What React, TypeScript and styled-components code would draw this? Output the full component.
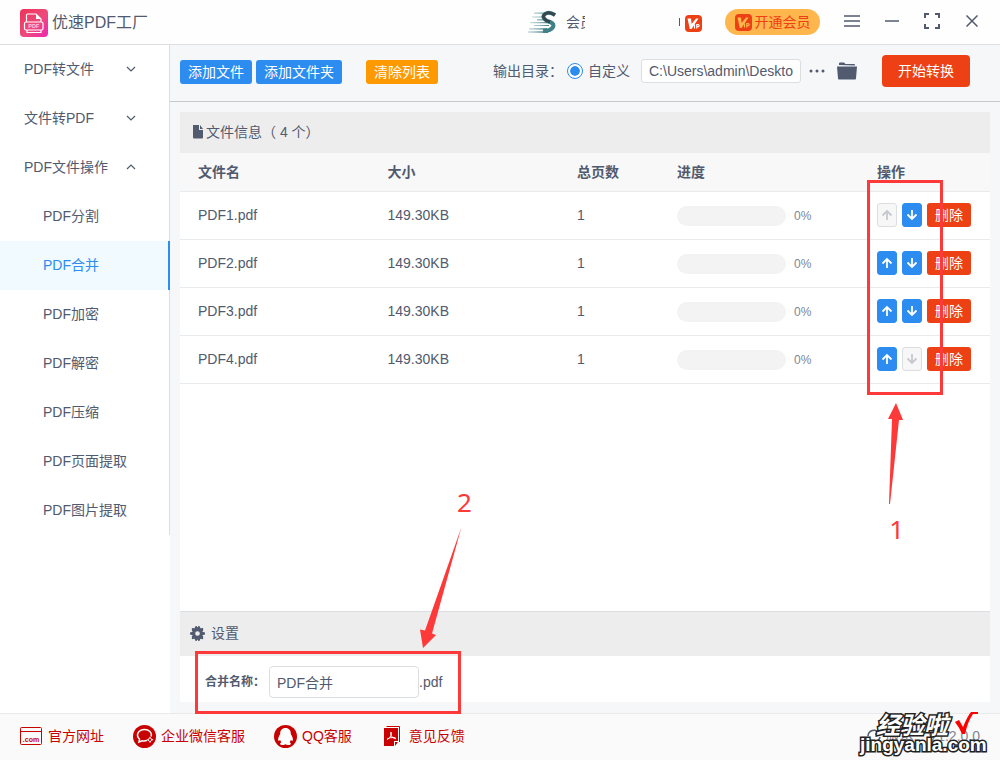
import React, { useState } from 'react';
import styled, { createGlobalStyle, css } from 'styled-components';

const text = '#515a6e';
const blue = '#2d8cf0';
const red = '#ed4014';
const mark = '#fd3939';
const line = '#dcdee2';

const GlobalStyle = createGlobalStyle`
  * { box-sizing: border-box; }
  body {
    margin: 0;
    background: #f5f7f9;
    color: ${text};
    font: 14px/20px "Liberation Sans", "Noto Sans CJK SC", sans-serif;
  }
  button, input { font: inherit; color: inherit; }
  button { border: 0; padding: 0; cursor: pointer; }
  svg { display: block; flex: none; }
`;

const Page = styled.div`
  min-height: 100vh;
  display: flex;
  flex-direction: column;
`;

const Header = styled.header`
  height: 45px;
  flex: none;
  display: flex;
  align-items: center;
  padding: 0 20px;
  background: #fefefe;
  border-bottom: 1px solid ${line};
`;

const Brand = styled.h1`
  margin: 2px auto 0 0;
  display: flex;
  align-items: center;
  gap: 4px;
  font-size: 16px;
  font-weight: 400;
`;

const Account = styled.div`
  display: flex;
  align-items: center;
  gap: 10px;
`;

const UserName = styled.span`
  width: 19px;
  height: 20px;
  overflow: hidden;
  white-space: nowrap;
`;

const NameEnd = styled.span`
  width: 1px;
  height: 8px;
  margin: 0 5px 0 84px;
  background: ${text};
`;

const VipBadge = styled.span`
  display: flex;
  margin: 2px 0 0 -10px;
`;

const JoinButton = styled.button`
  height: 26px;
  width: 95px;
  display: flex;
  align-items: center;
  justify-content: center;
  gap: 3px;
  margin: 0 24px 0 23px;
  border-radius: 13px;
  background: #ffb64d;
  color: ${red};
`;

const WindowControls = styled.div`
  display: flex;
  gap: 24px;
  padding-bottom: 2px;
`;

const IconButton = styled.button`
  min-width: 16px;
  height: 20px;
  display: flex;
  align-items: center;
  justify-content: center;
  background: none;
`;

const Body = styled.div`
  flex: 1;
  display: flex;
`;

const Sidebar = styled.nav`
  width: 170px;
  flex: none;
  background: #fff;
`;

const Menu = styled.div`
  border-right: 1px solid ${line};
`;

const MenuGroup = styled.button`
  width: 100%;
  height: 49px;
  display: flex;
  align-items: center;
  justify-content: space-between;
  padding: 0 33px 2px 24px;
  background: none;
`;

const MenuItem = styled.a<{ $active?: boolean }>`
  height: 49px;
  display: flex;
  align-items: center;
  padding: 0 0 2px 43px;
  color: inherit;
  text-decoration: none;
  ${p => p.$active && css`
    margin-right: -1px;
    color: ${blue};
    background: #f0faff;
    border-right: 2px solid ${blue};
  `}
`;

const Main = styled.main`
  flex: 1;
  min-width: 0;
  display: flex;
  flex-direction: column;
`;

const Toolbar = styled.div`
  height: 57px;
  flex: none;
  display: flex;
  align-items: center;
  padding: 0 30px 4px 10px;
  border-bottom: 1px solid #c8cad0;
`;

const Button = styled.button<{ $color?: string; $large?: boolean }>`
  height: ${p => (p.$large ? 32 : 24)}px;
  padding: 0 ${p => (p.$large ? 16 : 8)}px;
  border-radius: ${p => (p.$large ? 4 : 3)}px;
  background: ${p => p.$color ?? blue};
  color: #fff;
  white-space: nowrap;
`;

const ListButtons = styled.div`
  display: flex;
  gap: 24px;
  padding-top: 2px;
`;

const AddButtons = styled.div`
  display: flex;
  gap: 4px;
`;

const OutputOptions = styled.div`
  display: flex;
  align-items: center;
  margin-left: auto;
  margin-right: 25px;
`;

const RadioLabel = styled.label`
  display: flex;
  align-items: center;
  gap: 5px;
  margin-right: 11px;
`;

const Radio = styled.input`
  appearance: none;
  width: 16px;
  height: 16px;
  margin: 0 0 0 4px;
  padding: 2px;
  border: 1px solid ${blue};
  border-radius: 50%;
  background: ${blue} content-box;
  box-shadow: inset 0 0 0 2px #fff;
`;

const TextBox = styled.input<{ $tall?: boolean }>`
  width: ${p => (p.$tall ? 150 : 160)}px;
  height: ${p => (p.$tall ? 32 : 24)}px;
  padding: 0 7px;
  border: 1px solid ${line};
  border-radius: ${p => (p.$tall ? 4 : 3)}px;
  background: #fff;
  outline: 0;
`;

const Tools = styled.div`
  display: flex;
  align-items: center;
  gap: 12px;
  margin-left: 8px;
`;

const Workspace = styled.div`
  flex: 1;
  display: flex;
  flex-direction: column;
  padding: 10px 10px 11px;
`;

const FilePanel = styled.section`
  position: relative;
  flex: 1;
  background: #fff;
`;

const PanelTitle = styled.h2<{ $settings?: boolean }>`
  height: ${p => (p.$settings ? 45 : 41)}px;
  margin: 0;
  display: flex;
  align-items: center;
  gap: ${p => (p.$settings ? 6 : 2)}px;
  padding: 0 0 2px ${p => (p.$settings ? 10 : 12)}px;
  background: #ededed;
  border-top: ${p => (p.$settings ? `1px solid ${line}` : '0')};
  font-size: 14px;
  font-weight: 400;
`;

const Table = styled.table`
  width: 100%;
  table-layout: fixed;
  border-collapse: separate;
  border-spacing: 0;
  text-align: left;
  th, td {
    padding: 0 0 0 18px;
    border-bottom: 1px solid #e8eaec;
    white-space: nowrap;
  }
  th { height: 39px; background: #f8f8f9; font-weight: 700; }
  td { height: 48px; padding-bottom: 2px; }
`;

const Column = styled.col<{ $width?: number }>`
  width: ${p => (p.$width ? `${p.$width}px` : 'auto')};
`;

const Progress = styled.div`
  display: flex;
  align-items: center;
  gap: 8px;
  padding-top: 2px;
  font-size: 12px;
  color: #808695;
`;

const Track = styled.div`
  width: 109px;
  height: 20px;
  border-radius: 10px;
  background: #f3f3f3;
`;

const Actions = styled.div`
  display: flex;
  gap: 5px;
`;

const MoveButton = styled.button`
  width: 20px;
  height: 24px;
  display: flex;
  align-items: center;
  justify-content: center;
  border: 1px solid ${blue};
  border-radius: 3px;
  background: ${blue};
  color: #fff;
  &:disabled {
    border-color: ${line};
    background: #f7f7f7;
    color: #c5c8ce;
  }
`;

const Settings = styled.section`
  position: relative;
  background: #fff;
`;

const NameRow = styled.div`
  display: flex;
  align-items: center;
  padding: 10px 25px 4px;
`;

const NameLabel = styled.label`
  width: 64px;
  font-size: 12px;
  font-weight: 700;
`;

const Footer = styled.footer`
  position: relative;
  height: 47px;
  flex: none;
  display: flex;
  align-items: center;
  gap: 29px;
  padding: 0 20px 2px;
  background: #fafafa;
  border-top: 1px solid #e8eaec;
`;

const FooterLink = styled.a`
  display: flex;
  align-items: center;
  gap: 5px;
  color: #c90000;
  text-decoration: none;
`;

const Version = styled.span`
  display: flex;
  align-items: center;
  gap: 5px;
  margin-left: auto;
  color: #808695;
`;

const FrameMark = styled.div<{ $target: 'actions' | 'name' }>`
  position: absolute;
  border: 3px solid ${mark};
  pointer-events: none;
  ${p => p.$target === 'actions'
    ? css`top: 68px; right: 47px; width: 76px; height: 215px;`
    : css`top: 40px; left: 15px; width: 266px; height: 63px; z-index: 2;`}
`;

const ArrowMark = styled.svg<{ $target: 'actions' | 'name' }>`
  position: absolute;
  z-index: 2;
  fill: ${mark};
  pointer-events: none;
  ${p => p.$target === 'actions'
    ? css`top: 291px; right: 86px;`
    : css`top: -85px; left: 239px;`}
`;

const StepNumber = styled.span<{ $target: 'actions' | 'name' }>`
  position: absolute;
  color: ${mark};
  font: 26px/32px "Noto Sans", sans-serif;
  ${p => p.$target === 'actions' ? css`top: 401px; right: 86px;` : css`top: -125px; left: 277px;`}
`;

const Watermark = styled.div`
  position: absolute;
  right: 14px;
  bottom: 6px;
  width: 126px;
  color: #fff;
  font: 700 19px/18px "Liberation Sans", sans-serif;
  -webkit-text-stroke: 3px #222;
  paint-order: stroke fill;
`;

const WatermarkName = styled.div`
  display: flex;
  align-items: center;
  gap: 6px;
  padding-left: 16px;
  font: italic 700 24px/24px "Noto Sans CJK SC", sans-serif;
`;

const VipIcon = ({ cut = '#fff' }: { cut?: string }) => (
  <svg width="17" height="17" viewBox="0 0 17 17">
    <rect width="17" height="17" rx="4" fill={red} />
    <path d="M2.5 3.5H6l.6 5.500L11 3.500h2.500L6.500 14H4.800z" fill={cut} />
    <path d="M9.500 9.500v4M11.800 13.500v-4h1.400q1 0 1 1t-1 1.100h-1.400" fill="none" stroke={cut} strokeWidth="1.200" />
  </svg>
);

const Chevron = ({ up }: { up?: boolean }) => (
  <svg width="10" height="6" viewBox="0 0 10 6" fill="none" stroke={text} strokeWidth="1.200">
    <path d={up ? 'M1 5l4-4 4 4' : 'M1 1l4 4 4-4'} />
  </svg>
);

const MoveIcon = ({ down }: { down?: boolean }) => (
  <svg width="12" height="12" viewBox="0 0 12 12" fill="none" stroke="currentColor" strokeWidth="1.800">
    <path d={down ? 'M6 1v9M1.500 5.500L6 10l4.500-4.500' : 'M6 11V2M1.500 6.500L6 2l4.500 4.500'} />
  </svg>
);

const AppLogo = () => (
  <svg width="28" height="28" viewBox="0 0 28 28">
    <defs>
      <linearGradient id="logo" x1="0" y1="0" x2="1" y2="1">
        <stop offset="0" stopColor="#ee3157" />
        <stop offset=".55" stopColor="#ed4b7c" />
        <stop offset="1" stopColor="#ef25b3" />
      </linearGradient>
    </defs>
    <rect width="28" height="28" rx="4" fill="url(#logo)" />
    <g fill="none" stroke="#fff" strokeWidth="1.200">
      <path d="M6.500 13V6.200Q6.500 5 7.700 5H16l5 5v3M7 21v2.500h14V21" />
      <rect x="4.500" y="13" width="18.500" height="8" rx="1.500" />
    </g>
    <path d="M16 5l5 5h-5z" fill="#fff" />
    <text x="13.800" y="19" fontSize="5.500" fontWeight="700" textAnchor="middle" fill="#fbd0dd" fontFamily="Liberation Sans">PDF</text>
  </svg>
);

const Avatar = () => (
  <svg width="28" height="24" viewBox="0 0 28 24">
    <defs>
      <linearGradient id="speed" x1="0" y1="0" x2="1" y2="0">
        <stop offset="0" stopColor="#8fb5bb" stopOpacity=".35" />
        <stop offset="1" stopColor="#438189" />
      </linearGradient>
    </defs>
    <path d="M6 2.500h13v1.200H6zM4 6.500h11v1H4zM9 9h8v1.500H9zM2 12h17v1.200H2zM6 15h15v1H6zM1 18h18v1.800H1zM0 21h20v2H0z" fill="url(#speed)" />
    <path d="M27 5Q21 1 17 4t2 7q8 2 6 6-2 4-10 4" fill="none" stroke="#408089" strokeWidth="4" />
    <path d="M27 5Q21 1 17 4t2 7l3 1" fill="none" stroke="#36464f" strokeWidth="3" />
  </svg>
);

const DocIcon = () => (
  <svg width="12" height="14" viewBox="0 0 12 14" fill={text}>
    <path d="M1 0h6v5h4v7.500q0 1-1 1H2q-1 0-1-1z" /><path d="M8 0l3 4H8z" />
  </svg>
);

const GearIcon = () => (
  <svg width="15" height="15" viewBox="0 0 16 16">
    <path fill={text} fillRule="evenodd" d="M6 0h1l1 1.500L9 0h1l1.200 2.400L14 2v3l-1 1.200 3 .8v2l-3 .8L14 11v3l-2.800-.4L10 16H9l-1-1.500L7 16H6l-1.200-2.400L2 14v-3l1-1.200L0 9V7l3-.8L2 5V2l2.800.4zM8 5.500a2.500 2.500 0 1 0 0 5 2.500 2.500 0 0 0 0-5z" />
  </svg>
);

const FolderIcon = () => (
  <svg width="20" height="18" viewBox="0 0 20 18" fill={text}>
    <path d="M2 3V1.500Q2 .5 3 .5h4l1.500 1.500H17q1 0 1 1v.5z" />
    <path d="M0 4.500h20l-1 12q0 1-1 1H2q-1 0-1-1z" />
  </svg>
);

const SiteIcon = () => (
  <svg width="23" height="18" viewBox="0 0 23 18">
    <path d="M1.500.5h19q1 0 1 1v15q0 1-1 1h-19q-1 0-1-1v-15q0-1 1-1zM.5 4.500h21" fill="none" stroke="#c90000" />
    <text x="11" y="14.500" fontSize="7" fontWeight="700" textAnchor="middle" fill="#c90000" fontFamily="Liberation Sans">.com</text>
  </svg>
);

const ChatIcon = () => (
  <svg width="23" height="23" viewBox="0 0 23 23">
    <circle cx="11.500" cy="11.500" r="11.500" fill="#c90000" />
    <path d="M14 15.500q-3 .8-5 .2l-3 1.300.5-3Q3.500 11.500 5 8q2-3.500 6.500-3.500T18 8q.8 2 0 3.500" fill="none" stroke="#fff" strokeWidth="1.500" />
    <path d="M17 11.500l1.300 2 2.200 1.300-2.200 1.300-1.300 2-1.300-2-2.200-1.300 2.200-1.300z" fill="#fff" />
    <circle cx="17" cy="14.800" r="1.200" fill="#c90000" />
  </svg>
);

const QQIcon = () => (
  <svg width="23" height="23" viewBox="0 0 23 23">
    <circle cx="11.500" cy="11.500" r="11.500" fill="#c90000" />
    <path d="M11.500 3C8 3 6 5.500 6.200 9c-1.700 2.500-2.700 5.500-1.700 7l1.700-1 1 2.500c-2 1-1 2.500 1 2.500 1.700 0 2.700-.8 3.300-.8s1.600.8 3.300.8c2 0 3-1.500 1-2.500l1-2.500 1.700 1c1-1.500 0-4.500-1.700-7C17 5.500 15 3 11.500 3z" fill="#fff" />
  </svg>
);

const FeedbackIcon = () => (
  <svg width="23" height="22" viewBox="0 0 23 22">
    <path d="M5.500 1.500H18.500V17" fill="none" stroke="#c90000" />
    <path d="M3 3h14v13h-4v5H3zM14 17h3l-3 4z" fill="#c90000" />
    <path d="M10 7q1.200 1.500 0 3.500-1 2.500-4 4 2-2.500 7.500-2 1.500.2 1 1.200-3.500-.5-4.500-3.500-1-2 0-3.200z" fill="none" stroke="#fff" />
  </svg>
);

const files = ['PDF1.pdf', 'PDF2.pdf', 'PDF3.pdf', 'PDF4.pdf'];
const operations = ['PDF分割', 'PDF合并', 'PDF加密', 'PDF解密', 'PDF压缩', 'PDF页面提取', 'PDF图片提取'];

export default function App() {
  const [folder, setFolder] = useState('C:\\Users\\admin\\Deskto');
  const [name, setName] = useState('PDF合并');

  return (
    <>
      <GlobalStyle />
      <Page>
        <Header>
          <Brand><AppLogo />优速PDF工厂</Brand>
          <Account>
            <Avatar />
            <UserName>会员</UserName>
            <NameEnd />
            <VipBadge><VipIcon /></VipBadge>
          </Account>
          <JoinButton><VipIcon cut="#ffb64d" />开通会员</JoinButton>
          <WindowControls>
            <IconButton aria-label="菜单">
              <svg width="16" height="12" viewBox="0 0 16 12" stroke={text} strokeWidth="1.500"><path d="M0 1h16M0 6h16M0 11h16" /></svg>
            </IconButton>
            <IconButton aria-label="最小化">
              <svg width="14" height="12" viewBox="0 0 14 12" stroke={text} strokeWidth="1.500"><path d="M0 6h14" /></svg>
            </IconButton>
            <IconButton aria-label="全屏">
              <svg width="16" height="16" viewBox="0 0 16 16" fill="none" stroke={text} strokeWidth="2"><path d="M1 5V1h4M11 1h4v4M15 11v4h-4M5 15H1v-4" /></svg>
            </IconButton>
            <IconButton aria-label="关闭">
              <svg width="12" height="12" viewBox="0 0 12 12" stroke={text} strokeWidth="1.500"><path d="M.5.5l11 11M11.500.5l-11 11" /></svg>
            </IconButton>
          </WindowControls>
        </Header>

        <Body>
          <Sidebar>
            <Menu>
              <MenuGroup>PDF转文件<Chevron /></MenuGroup>
              <MenuGroup>文件转PDF<Chevron /></MenuGroup>
              <MenuGroup aria-expanded="true">PDF文件操作<Chevron up /></MenuGroup>
              {operations.map(item => (
                <MenuItem key={item} href="#" $active={item === 'PDF合并'}>{item}</MenuItem>
              ))}
            </Menu>
          </Sidebar>

          <Main>
            <Toolbar>
              <ListButtons>
                <AddButtons>
                  <Button>添加文件</Button>
                  <Button>添加文件夹</Button>
                </AddButtons>
                <Button $color="#ff9900">清除列表</Button>
              </ListButtons>
              <OutputOptions>
                <span>输出目录：</span>
                <RadioLabel><Radio type="radio" name="output" defaultChecked />自定义</RadioLabel>
                <TextBox aria-label="输出目录" value={folder} onChange={e => setFolder(e.target.value)} />
                <Tools>
                  <IconButton aria-label="选择目录">
                    <svg width="16" height="4" viewBox="0 0 16 4" fill={text}>
                      <circle cx="2" cy="2" r="1.500" /><circle cx="8" cy="2" r="1.500" /><circle cx="14" cy="2" r="1.500" />
                    </svg>
                  </IconButton>
                  <IconButton aria-label="打开文件夹"><FolderIcon /></IconButton>
                </Tools>
              </OutputOptions>
              <Button $color={red} $large>开始转换</Button>
            </Toolbar>

            <Workspace>
              <FilePanel>
                <PanelTitle><DocIcon />文件信息（ 4 个）</PanelTitle>
                <Table>
                  <colgroup>
                    <Column /><Column /><Column $width={100} /><Column $width={200} /><Column $width={131} />
                  </colgroup>
                  <thead>
                    <tr><th>文件名</th><th>大小</th><th>总页数</th><th>进度</th><th>操作</th></tr>
                  </thead>
                  <tbody>
                    {files.map((file, i) => (
                      <tr key={file}>
                        <td>{file}</td>
                        <td>149.30KB</td>
                        <td>1</td>
                        <td><Progress><Track />0%</Progress></td>
                        <td>
                          <Actions>
                            <MoveButton aria-label="上移" disabled={i === 0}><MoveIcon /></MoveButton>
                            <MoveButton aria-label="下移" disabled={i === files.length - 1}><MoveIcon down /></MoveButton>
                            <Button $color={red}>删除</Button>
                          </Actions>
                        </td>
                      </tr>
                    ))}
                  </tbody>
                </Table>
                <FrameMark $target="actions" />
                <ArrowMark $target="actions" width="18" height="102" viewBox="0 0 18 102">
                  <path d="M10 0l7 17h-4L4 101H3L6 16H2z" />
                </ArrowMark>
                <StepNumber $target="actions">1</StepNumber>
              </FilePanel>

              <Settings>
                <PanelTitle $settings><GearIcon />设置</PanelTitle>
                <NameRow>
                  <NameLabel htmlFor="merged-name">合并名称：</NameLabel>
                  <TextBox id="merged-name" $tall value={name} onChange={e => setName(e.target.value)} />
                  <span>.pdf</span>
                </NameRow>
                <FrameMark $target="name" />
                <ArrowMark $target="name" width="44" height="124" viewBox="0 0 44 124">
                  <path d="M42.500 1L13 107.500l4 1.500L4 122 1 103.500l5 1z" />
                </ArrowMark>
                <StepNumber $target="name">2</StepNumber>
              </Settings>
            </Workspace>
          </Main>
        </Body>

        <Footer>
          <FooterLink href="#"><SiteIcon />官方网址</FooterLink>
          <FooterLink href="#"><ChatIcon />企业微信客服</FooterLink>
          <FooterLink href="#"><QQIcon />QQ客服</FooterLink>
          <FooterLink href="#"><FeedbackIcon />意见反馈</FooterLink>
          <Version>
            <svg width="14" height="14" viewBox="0 0 14 14" fill="none" stroke={text} strokeWidth="1.500">
              <path d="M1 7a6 6 0 0 1 11-3M12 1v4H8M13 8a6 6 0 0 1-11 2" />
            </svg>
            版本：V1.2.0.0
          </Version>
          <Watermark>
            <WatermarkName>
              经验啦
              <svg width="24" height="24" viewBox="0 0 24 24"><path d="M1 10l4-2 4 7Q13 5 17 0h7v2h-5Q14 9 11 22H8Q5 15 1 10z" fill="#f00" /></svg>
            </WatermarkName>
            jingyanla.com
          </Watermark>
        </Footer>
      </Page>
    </>
  );
}
